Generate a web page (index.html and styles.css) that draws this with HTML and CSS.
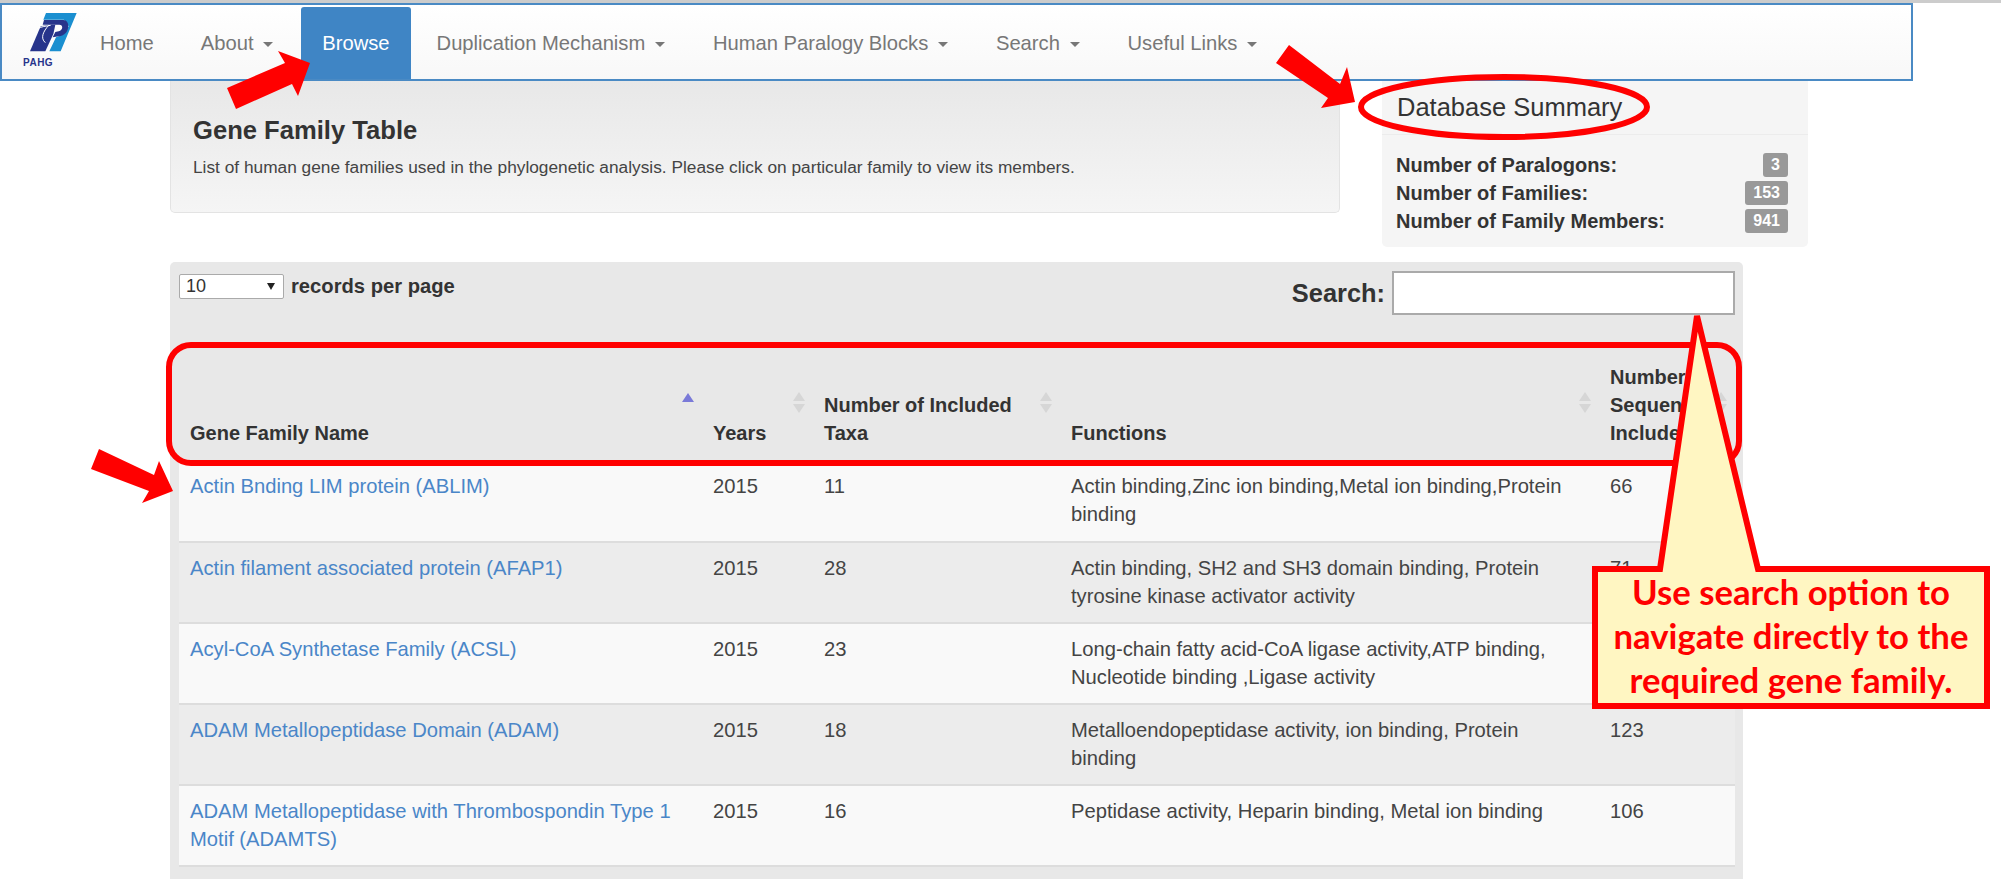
FILE: index.html
```html
<!DOCTYPE html>
<html lang="en">
<head>
    <meta charset="UTF-8">
    <title>Gene Family Table</title>
    <link rel="stylesheet" href="styles.css">
</head>
<body>

    <nav class="navbar">
        <a class="brand" href="#">
            <svg class="brand-mark" width="50" height="42" viewBox="21 15 150 126">
                <polygon points="78,15 170,15 122,130 88,130 108,88 132,78 146,55 132,35 70,35" fill="#1b8fd0" />
                <path d="M62 55 L30 130 H76 L100 78 L106 50 H88 Z" fill="#27348b" />
                <path d="M72 36 H130 C152 36 150 78 122 84 L98 88 L106 72 L116 70 C130 66 130 50 118 50 H68 Z" fill="#27348b" />
                <path d="M52 62 C62 56 80 54 92 52 M86 52 C70 70 60 90 76 104" fill="none" stroke="#fff" stroke-width="3" />
            </svg>
            <span class="brand-name">PAHG</span>
        </a>
        <ul class="nav-list">
            <li class="home"><a href="#">Home</a></li>
            <li><a href="#">About <span class="caret"></span></a></li>
            <li class="active"><a href="#">Browse</a></li>
            <li><a href="#">Duplication Mechanism <span class="caret"></span></a></li>
            <li><a href="#">Human Paralogy Blocks <span class="caret"></span></a></li>
            <li><a href="#">Search <span class="caret"></span></a></li>
            <li><a href="#">Useful Links <span class="caret"></span></a></li>
        </ul>
    </nav>

    <main class="content">
        <div class="top-row">
            <section class="intro">
                <h3>Gene Family Table</h3>
                <p>List of human gene families used in the phylogenetic analysis. Please click on particular family to view its members.</p>
            </section>
            <aside class="summary">
                <h4>Database Summary</h4>
                <ul>
                    <li><b>Number of Paralogons:</b> <span class="badge">3</span></li>
                    <li><b>Number of Families:</b> <span class="badge">153</span></li>
                    <li><b>Number of Family Members:</b> <span class="badge">941</span></li>
                </ul>
            </aside>
        </div>

        <section class="table-panel">
            <div class="table-tools">
                <label class="per-page">
                    <span class="fake-select">10 <i class="select-arrow"></i></span>
                    records per page
                </label>
                <label class="search-box">Search: <input type="text"></label>
            </div>
            <table class="family-table">
                <colgroup>
                    <col class="col-name">
                    <col class="col-years">
                    <col class="col-taxa">
                    <col class="col-func">
                    <col class="col-seq">
                </colgroup>
                <thead>
                    <tr>
                        <th>Gene Family Name <span class="sort sort-asc"></span></th>
                        <th>Years <span class="sort"></span></th>
                        <th>Number of Included Taxa <span class="sort"></span></th>
                        <th>Functions <span class="sort"></span></th>
                        <th>Number of Sequences Included <span class="sort"></span></th>
                    </tr>
                </thead>
                <tbody>
                    <tr>
                        <td><a href="#">Actin Bnding LIM protein (ABLIM)</a></td>
                        <td>2015</td>
                        <td>11</td>
                        <td class="func">Actin binding,Zinc ion binding,Metal ion binding,Protein binding</td>
                        <td>66</td>
                    </tr>
                    <tr>
                        <td><a href="#">Actin filament associated protein (AFAP1)</a></td>
                        <td>2015</td>
                        <td>28</td>
                        <td class="func">Actin binding, SH2 and SH3 domain binding, Protein tyrosine kinase activator activity</td>
                        <td>71</td>
                    </tr>
                    <tr>
                        <td><a href="#">Acyl-CoA Synthetase Family (ACSL)</a></td>
                        <td>2015</td>
                        <td>23</td>
                        <td class="func">Long-chain fatty acid-CoA ligase activity,ATP binding, Nucleotide binding ,Ligase activity</td>
                        <td></td>
                    </tr>
                    <tr>
                        <td><a href="#">ADAM Metallopeptidase Domain (ADAM)</a></td>
                        <td>2015</td>
                        <td>18</td>
                        <td class="func">Metalloendopeptidase activity, ion binding, Protein binding</td>
                        <td>123</td>
                    </tr>
                    <tr>
                        <td><a href="#">ADAM Metallopeptidase with Thrombospondin Type 1 Motif (ADAMTS)</a></td>
                        <td>2015</td>
                        <td>16</td>
                        <td class="func">Peptidase activity, Heparin binding, Metal ion binding</td>
                        <td>106</td>
                    </tr>
                </tbody>
            </table>
        </section>
    </main>

    <!-- red annotations drawn over the page -->
    <svg class="notes" width="2001" height="880" viewBox="0 0 2001 880">
        <polygon class="arrow" points="227,88 236,109 292,84 298,96 310,63 278,51 285,63" />
        <polygon class="arrow" points="1289,45 1276,63 1328,98 1321,108 1355,102 1347,67 1340,84" />
        <polygon class="arrow" points="99,449 91,469 149,491 142,503 173,491 159,461 154,475" />
        <ellipse class="ring" cx="1504" cy="107" rx="143" ry="30" />
        <rect class="ring" x="169" y="345" width="1570" height="118" rx="22" />
        <polygon class="callout" points="1595,569 1660,569 1697,316 1758,569 1987,569 1987,706 1595,706" />
    </svg>
    <p class="callout-text">Use search option to navigate directly to the required gene family.</p>

</body>
</html>
```

FILE: styles.css
```css
html, body {
    height: 880px;
    overflow: hidden;
}
body {
    margin: 0;
    position: relative;
    background-color: #fff;
    border-top: 3px solid #ccc;
    box-sizing: border-box;
    font-family: "Liberation Sans", Arial, sans-serif;
    font-size: 20.2px;
    line-height: 28px;
    color: #444;
}
a {
    color: #4a86c8;
    text-decoration: none;
}

/* navbar */
.navbar {
    display: flex;
    width: 1913px;
    height: 78px;
    box-sizing: border-box;
    border: 2px solid #4a8ac4;
    background: linear-gradient(to bottom, #fff, #f8f8f8);
}
.brand {
    display: flex;
    flex-direction: column;
    align-items: flex-start;
    width: 98px;
    padding-top: 8px;
    box-sizing: border-box;
}
.brand-mark {
    margin-left: 25px;
}
.brand-name {
    font-size: 10px;
    line-height: 12px;
    font-weight: bold;
    letter-spacing: 0.5px;
    color: #27348b;
    margin-top: 2px;
    margin-left: 21px;
}
.nav-list {
    display: flex;
    list-style: none;
    margin: 0;
    padding: 0;
}
.nav-list a {
    display: block;
    padding: 22px 24px 0;
    height: 72px;
    margin-top: 2px;
    box-sizing: border-box;
    color: #777;
}
.nav-list .home a {
    padding-left: 0;
    padding-right: 23px;
}
.nav-list .active {
    margin: 0 2px 0 4px;
}
.nav-list .active a {
    padding-left: 21px;
    padding-right: 21px;
    background-color: #3f85c5;
    color: #fff;
    border-radius: 3px 3px 0 0;
}
.caret {
    display: inline-block;
    margin-left: 4px;
    vertical-align: middle;
    border-top: 5px solid #777;
    border-left: 5px solid transparent;
    border-right: 5px solid transparent;
}

/* top panels */
.content {
    margin-left: 170px;
    width: 1638px;
}
.top-row {
    display: flex;
    gap: 42px;
    align-items: flex-start;
    height: 181px;
}
.intro {
    width: 1170px;
    height: 132px;
    box-sizing: border-box;
    padding: 33px 22px 0;
    background: linear-gradient(to bottom, #e8e8e8, #f5f5f5);
    border: 1px solid #e3e3e3;
    border-top: 0;
    border-radius: 0 0 5px 5px;
}
.intro h3 {
    margin: 0;
    font-size: 25.6px;
    line-height: 32px;
    color: #333;
}
.intro p {
    margin: 9px 0 0;
    font-size: 17.3px;
    line-height: 24px;
    color: #444;
}
.summary {
    width: 426px;
    height: 166px;
    box-sizing: border-box;
    background-color: #f5f5f5;
    border-radius: 0 0 5px 5px;
}
.summary h4 {
    margin: 0;
    height: 54px;
    box-sizing: border-box;
    padding: 10px 15px 0;
    border-bottom: 1px solid #ececec;
    font-size: 25.5px;
    line-height: 32px;
    font-weight: normal;
    color: #333;
}
.summary ul {
    list-style: none;
    margin: 0;
    padding: 18px 20px 0 14px;
}
.summary li {
    display: flex;
    justify-content: space-between;
    height: 28px;
    font-size: 20px;
    line-height: 24px;
    color: #333;
}
.badge {
    height: 24px;
    padding: 0 8px;
    background-color: #999;
    border-radius: 3px;
    font-size: 16px;
    font-weight: bold;
    line-height: 24px;
    color: #fff;
}

/* table panel */
.table-panel {
    width: 1573px;
    height: 617px;
    box-sizing: border-box;
    padding: 9px 8px 0 9px;
    background-color: #e8e8e8;
    border-radius: 5px 5px 0 0;
}
.table-tools {
    display: flex;
    justify-content: space-between;
    align-items: flex-start;
    height: 77px;
}
.per-page {
    display: flex;
    align-items: center;
    gap: 7px;
    margin-top: 1px;
    font-weight: bold;
    color: #333;
}
.fake-select {
    position: relative;
    display: block;
    width: 105px;
    height: 25px;
    box-sizing: border-box;
    padding-left: 6px;
    font-size: 18px;
    line-height: 22px;
    font-weight: normal;
    background-color: #fff;
    border: 1px solid #aaa;
    border-radius: 2px;
}
.select-arrow {
    position: absolute;
    right: 8px;
    top: 8px;
    border-top: 7px solid #222;
    border-left: 4px solid transparent;
    border-right: 4px solid transparent;
}
.search-box {
    display: flex;
    align-items: center;
    gap: 7px;
    font-size: 25.4px;
    font-weight: bold;
    color: #333;
}
.search-box input {
    width: 343px;
    height: 44px;
    box-sizing: border-box;
    margin: 0;
    background-color: #fff;
    border: 2px solid #aaa;
}
.family-table {
    width: 1556px;
    table-layout: fixed;
    border-collapse: collapse;
}
.col-name { width: 523px; }
.col-years { width: 111px; }
.col-taxa { width: 247px; }
.col-func { width: 539px; }
.col-seq { width: 136px; }
th, td {
    text-align: left;
    vertical-align: top;
    padding: 6px 11px;
}
th {
    position: relative;
    vertical-align: bottom;
    height: 113px;
    box-sizing: border-box;
    padding-bottom: 14px;
    font-size: 20px;
    color: #333;
}
td {
    height: 81px;
    box-sizing: border-box;
    padding-top: 11px;
    border-bottom: 2px solid #ddd;
}
td.func {
    padding-right: 30px;
}
tbody tr:nth-child(odd) {
    background-color: #f9f9f9;
}
tbody tr:nth-child(even) {
    background-color: #ececec;
}

/* sort icons sit on top of the header cells */
.sort {
    position: absolute;
    right: 8px;
    top: 44px;
    width: 0;
    height: 0;
    border-left: 6px solid transparent;
    border-right: 6px solid transparent;
    border-bottom: 9px solid #d6d6d6;
}
.sort::after {
    content: "";
    position: absolute;
    left: -6px;
    top: 12px;
    border-left: 6px solid transparent;
    border-right: 6px solid transparent;
    border-top: 9px solid #d6d6d6;
}
.sort-asc {
    border-bottom-color: #7a7ad8;
    top: 45px;
    right: 8px;
}
.sort-asc::after {
    display: none;
}

/* annotations */
.notes {
    position: absolute;
    left: 0;
    top: -3px;
}
.arrow {
    fill: #ff0000;
}
.ring {
    fill: none;
    stroke: #ff0000;
    stroke-width: 6;
}
.callout {
    fill: #fff6c2;
    stroke: #ff0000;
    stroke-width: 6;
}
.callout-text {
    position: absolute;
    left: 1598px;
    top: 567px;
    width: 386px;
    margin: 0;
    font-family: Lato, "Liberation Sans", sans-serif;
    font-size: 34.7px;
    font-weight: bold;
    line-height: 44px;
    text-align: center;
    color: #ff0000;
}
```
